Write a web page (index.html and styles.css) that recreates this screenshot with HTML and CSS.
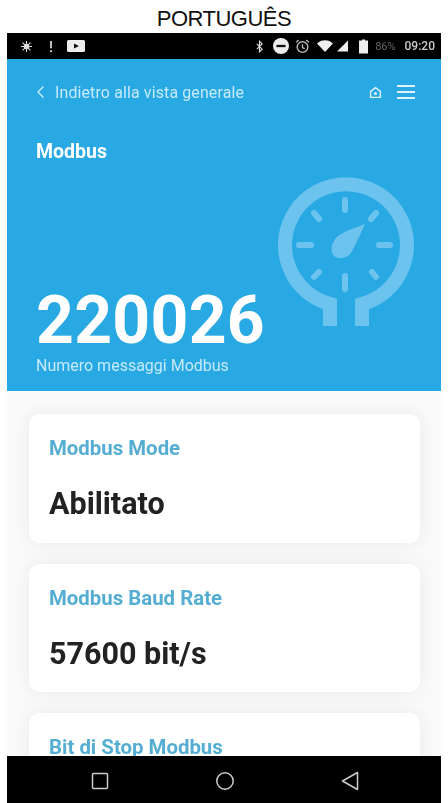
FILE: index.html
```html
<!DOCTYPE html>
<html lang="it">
<head>
<meta charset="utf-8">
<title>Modbus</title>
<link rel="stylesheet" href="styles.css">
</head>
<body>
<h1 class="doc-title">PORTUGUÊS</h1>
<div class="phone">
  <div class="status">
    <div class="status-group">
      <svg class="ic-sun" viewBox="0 0 14 14"><circle cx="7" cy="7" r="3" fill="#ddd"/><path d="M7 1v12M1 7h12M2.800 2.800l8.400 8.400M11.200 2.800l-8.400 8.400" stroke="#ddd" stroke-width="1.200"/></svg>
      <svg class="ic-bang" viewBox="0 0 4 14"><path d="M2 1v8" stroke="#ccc" stroke-width="2"/><circle cx="2" cy="12" r="1.200" fill="#ccc"/></svg>
      <svg class="ic-play" viewBox="0 0 18 12"><rect width="18" height="12" rx="1.500" fill="#eee"/><path d="M7 3.500l5 2.500-5 2.500z" fill="#111"/></svg>
    </div>
    <div class="status-group">
      <svg class="ic-bt" viewBox="0 0 8 14"><path d="M1 4l6 6-3 3V1l3 3-6 6" fill="none" stroke="#ddd" stroke-width="1.300"/></svg>
      <svg class="ic-dnd" viewBox="0 0 14 14"><circle cx="7" cy="7" r="7" fill="#eee"/><rect x="3" y="6" width="8" height="2" fill="#111"/></svg>
      <svg class="ic-alarm" viewBox="0 0 14 14"><circle cx="7" cy="7.500" r="5" fill="none" stroke="#bbb" stroke-width="1.300"/><path d="M7 5v3l2 1M1 3l2.500-2M13 3l-2.500-2" fill="none" stroke="#bbb" stroke-width="1.200"/></svg>
      <svg class="ic-wifi" viewBox="0 0 16 12"><path d="M0 3.500C4-1 12-1 16 3.500L8 12z" fill="#eee"/></svg>
      <svg class="ic-signal" viewBox="0 0 12 12"><path d="M12 0v12H0z" fill="#eee"/></svg>
      <svg class="ic-batt" viewBox="0 0 9 14"><path d="M3 0h3v1h3v13H0V1h3z" fill="#eee"/></svg>
      <span class="pct">86%</span>
      <span class="clock">09:20</span>
    </div>
  </div>
  <section class="hero">
    <svg class="gauge" viewBox="0 0 140 155">
      <path class="gauge-line" d="M55 149V127.100A61 61 0 1 1 87 127.100V149" />
      <path class="gauge-tick" d="M70 23V33M70 99V112M24 68H36M104 68H115M39 36L44 42M101 36L96 42M39 100L44 95M101 100L97 95"/>
      <path class="gauge-needle" d="M90 47C82 50 70 54 63 59C56 65 55 75 59 79C64 83 74 81 77 74C81 67 86 56 90 47Z"/>
    </svg>
    <div class="nav">
      <a class="back">
        <svg class="chev" viewBox="0 0 9 14"><path d="M7.500 1.500L2 7l5.500 5.500" fill="none" stroke="#cdeefb" stroke-width="1.400"/></svg>
        <span>Indietro alla vista generale</span>
      </a>
      <div class="nav-icons">
        <svg class="ic-home" viewBox="0 0 12 12"><path d="M1.500 5L6 1.500 10.500 5v5.500h-9z" fill="none" stroke="#dff3fc" stroke-width="1.300"/><circle cx="6" cy="7" r="1.400" fill="#dff3fc"/></svg>
        <svg class="ic-menu" viewBox="0 0 18 16"><path d="M0 2h18M0 8h18M0 14h18" stroke="#dff3fc" stroke-width="1.800"/></svg>
      </div>
    </div>
    <h2 class="hero-title">Modbus</h2>
    <div class="hero-value">220026</div>
    <div class="hero-label">Numero messaggi Modbus</div>
  </section>
  <main class="cards">
    <article class="card">
      <h3 class="card-label">Modbus Mode</h3>
      <p class="card-value">Abilitato</p>
    </article>
    <article class="card">
      <h3 class="card-label">Modbus Baud Rate</h3>
      <p class="card-value">57600 bit/s</p>
    </article>
    <article class="card">
      <h3 class="card-label">Bit di Stop Modbus</h3>
    </article>
  </main>
  <nav class="softkeys">
    <svg class="key" viewBox="0 0 20 20"><rect x="2.500" y="2.500" width="15" height="15" rx="1" fill="none" stroke="#ccc" stroke-width="1.500"/></svg>
    <svg class="key" viewBox="0 0 20 20"><circle cx="10" cy="10" r="8.200" fill="none" stroke="#ccc" stroke-width="1.500"/></svg>
    <svg class="key" viewBox="0 0 20 20"><path d="M17.500 1.500V18.500L2.500 10z" fill="none" stroke="#ccc" stroke-width="1.500" stroke-linejoin="round"/></svg>
  </nav>
</div>
</body>
</html>
```
FILE: styles.css
```css
* { box-sizing: border-box; }
html, body { margin: 0; height: 100%; background: #fff; overflow: hidden; }
body { font-family: Roboto, "Liberation Sans", sans-serif; }
.doc-title {
  margin: 0;
  height: 33px;
  font: 400 22px/38px "Liberation Sans", Arial, sans-serif;
  color: #111;
  text-align: center;
  letter-spacing: -0.5px;
}
.phone {
  width: 434px;
  height: 770px;
  margin-left: 7px;
  display: flex;
  flex-direction: column;
  overflow: hidden;
  background: #fafafa;
  filter: blur(0.6px);
}
.status {
  flex: none;
  height: 26px;
  background: #000;
  display: flex;
  justify-content: space-between;
  align-items: center;
  padding: 0 6px 0 13px;
}
.status-group { display: flex; align-items: center; }
.ic-sun { width: 13px; height: 13px; }
.ic-bang { width: 4px; height: 13px; margin-left: 16px; }
.ic-play { width: 18px; height: 12px; margin-left: 14px; }
.ic-bt { width: 7px; height: 13px; margin-right: 10px; }
.ic-dnd { width: 16px; height: 16px; margin-right: 6px; }
.ic-alarm { width: 15px; height: 15px; margin-right: 7px; }
.ic-wifi { width: 16px; height: 12px; margin-right: 4px; }
.ic-signal { width: 11px; height: 12px; margin-right: 11px; }
.ic-batt { width: 9px; height: 15px; margin-right: 7px; }
.pct { font-size: 11px; color: #666; margin-right: 9px; }
.clock { font-size: 12px; font-weight: 500; color: #ccc; }
.hero {
  flex: none;
  position: relative;
  height: 332px;
  background: #29a9e4;
  padding: 22px 26px 0 29px;
  color: #fff;
}
.gauge {
  position: absolute;
  left: 268px;
  top: 118px;
  width: 140px;
  height: 155px;
}
.gauge-line { fill: none; stroke: #6cc3ee; stroke-width: 14px; }
.gauge-tick { fill: none; stroke: #6cc3ee; stroke-width: 6px; stroke-linecap: round; }
.gauge-needle { fill: #6cc3ee; }
.nav { display: flex; justify-content: space-between; align-items: center; height: 22px; }
.back { display: flex; align-items: center; gap: 10px; font-size: 15.900px; color: #c5eafa; letter-spacing: 0.15px; }
.chev { width: 9px; height: 14px; }
.nav-icons { display: flex; align-items: center; gap: 15px; }
.ic-home { width: 13px; height: 13px; }
.ic-menu { width: 18px; height: 16px; }
.hero-title { margin: 36px 0 0; font-size: 19.500px; line-height: 26px; font-weight: 700; }
.hero-value { margin-top: 126px; font-size: 66px; line-height: 60px; font-weight: 700; letter-spacing: 0.3px; }
.hero-label { margin-top: 6px; font-size: 16px; line-height: 18px; color: #c5eafa; }
.cards {
  flex: 1;
  min-height: 0;
  overflow: hidden;
  padding: 23px 21px 0 22px;
  display: flex;
  flex-direction: column;
  gap: 21px;
}
.card {
  flex: none;
  height: 128.500px;
  background: #fff;
  border-radius: 11px;
  padding: 22px 20px 0;
  box-shadow: 0 0 20px rgba(0, 0, 0, 0.07);
}
.card-label { margin: 0; font-size: 20.400px; line-height: 24px; font-weight: 700; color: #55aed2; }
.card-value { margin: 28px 0 0; font-size: 30.500px; line-height: 32px; font-weight: 700; color: #222; }
.softkeys {
  flex: none;
  height: 47px;
  background: #000;
  display: flex;
  align-items: center;
  padding: 2px 0 0 83px;
  gap: 105px;
}
.key { width: 20px; height: 20px; }
```
